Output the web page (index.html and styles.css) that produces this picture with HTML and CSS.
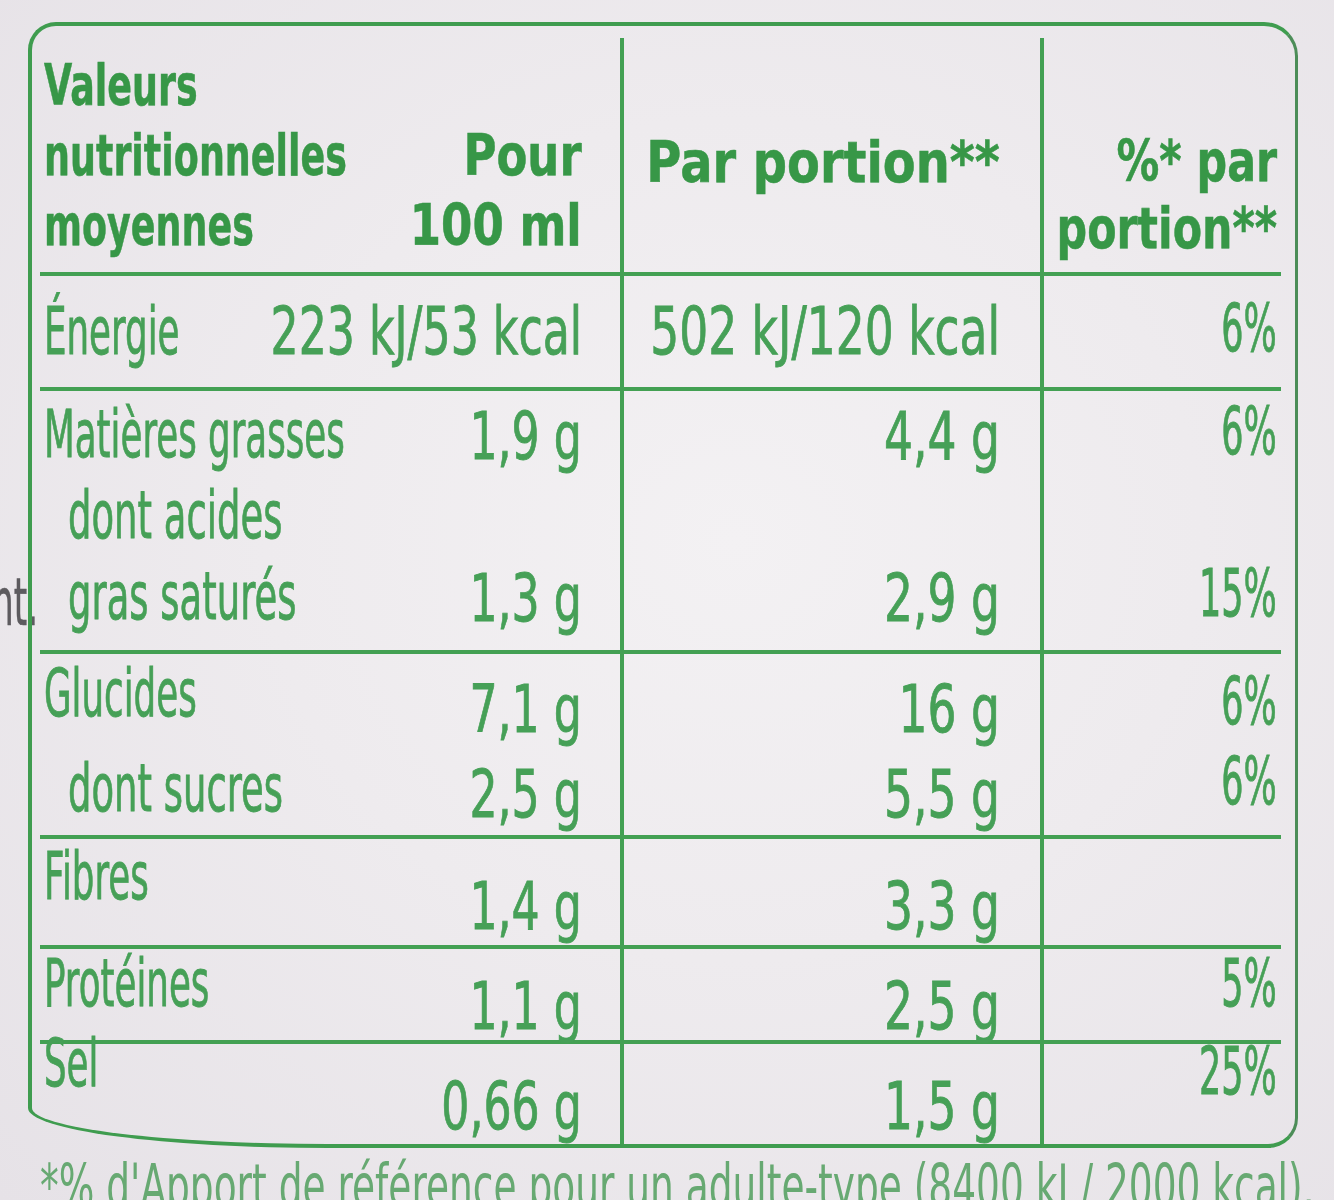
FILE: index.html
```html
<!DOCTYPE html>
<html lang="fr">
<head>
<meta charset="utf-8">
<title>Valeurs nutritionnelles</title>
<link rel="stylesheet" href="styles.css">
</head>
<body>
<div class="page">
  <div class="outside"><span class="t">nt.</span></div>
  <div class="box">
    <div class="row head">
      <div class="c lab"><div class="l"><span class="t">Valeurs</span></div><div class="l"><span class="t">nutritionnelles</span></div><div class="l"><span class="t">moyennes</span></div></div>
      <div class="c r va"><div class="l"><span class="t">Pour</span></div><div class="l"><span class="t">100 ml</span></div></div>
      <div class="c r vb"><div class="l"><span class="t">Par portion**</span></div></div>
      <div class="c r vc"><div class="l"><span class="t">%* par</span></div><div class="l"><span class="t">portion**</span></div></div>
    </div>
    <div class="row energie">
      <div class="c lab"><div class="l"><span class="t">Énergie</span></div></div>
      <div class="c r va"><div class="l"><span class="t">223 kJ/53 kcal</span></div></div>
      <div class="c r vb"><div class="l"><span class="t">502 kJ/120 kcal</span></div></div>
      <div class="c r vc"><div class="l"><span class="t">6%</span></div></div>
    </div>
    <div class="row mg">
      <div class="c lab"><div class="l"><span class="t">Matières grasses</span></div><div class="l sub"><span class="t">dont acides</span></div><div class="l sub"><span class="t">gras saturés</span></div></div>
      <div class="c r va"><div class="l"><span class="t">1,9 g</span></div><div class="l"></div><div class="l"><span class="t">1,3 g</span></div></div>
      <div class="c r vb"><div class="l"><span class="t">4,4 g</span></div><div class="l"></div><div class="l"><span class="t">2,9 g</span></div></div>
      <div class="c r vc"><div class="l"><span class="t">6%</span></div><div class="l"></div><div class="l"><span class="t">15%</span></div></div>
    </div>
    <div class="row glu">
      <div class="c lab"><div class="l"><span class="t">Glucides</span></div><div class="l sub"><span class="t">dont sucres</span></div></div>
      <div class="c r va"><div class="l"><span class="t">7,1 g</span></div><div class="l"><span class="t">2,5 g</span></div></div>
      <div class="c r vb"><div class="l"><span class="t">16 g</span></div><div class="l"><span class="t">5,5 g</span></div></div>
      <div class="c r vc"><div class="l"><span class="t">6%</span></div><div class="l"><span class="t">6%</span></div></div>
    </div>
    <div class="row fib">
      <div class="c lab"><div class="l"><span class="t">Fibres</span></div></div>
      <div class="c r va"><div class="l"><span class="t">1,4 g</span></div></div>
      <div class="c r vb"><div class="l"><span class="t">3,3 g</span></div></div>
      <div class="c r vc"></div>
    </div>
    <div class="row pro">
      <div class="c lab"><div class="l"><span class="t">Protéines</span></div></div>
      <div class="c r va"><div class="l"><span class="t">1,1 g</span></div></div>
      <div class="c r vb"><div class="l"><span class="t">2,5 g</span></div></div>
      <div class="c r vc"><div class="l"><span class="t">5%</span></div></div>
    </div>
    <div class="row sel">
      <div class="c lab"><div class="l"><span class="t">Sel</span></div></div>
      <div class="c r va"><div class="l"><span class="t">0,66 g</span></div></div>
      <div class="c r vb"><div class="l"><span class="t">1,5 g</span></div></div>
      <div class="c r vc"><div class="l"><span class="t">25%</span></div></div>
    </div>
  </div>
  <div class="foot"><span class="t">*% d'Apport de référence pour un adulte-type (8400 kJ / 2000 kcal).</span></div>
</div>
</body>
</html>
```

FILE: styles.css
```css
html, body {
  margin: 0;
  height: 1200px;
  overflow: hidden;
}
body {
  background: radial-gradient(ellipse at 55% 45%, #f3f1f3 0%, #eeebee 45%, #e6e2e7 100%);
  font-family: "DejaVu Sans", "Liberation Sans", sans-serif;
  color: #46a057;
}
.page {
  position: relative;
  padding-top: 22px;
  width: 1334px;
}
.box {
  margin-left: 28px;
  width: 1270px;
  height: 1126px;
  box-sizing: border-box;
  border: 4px solid #3f9c4f;
  border-right: 3px solid #4c8d58;
  border-radius: 28px 34px 30px 300px / 28px 34px 30px 40px;
  padding: 12px 14px 0 8px;
  filter: blur(0.5px);
}
.row {
  display: grid;
  grid-template-columns: 340px 240px 420px 1fr;
  border-top: 4px solid #43a053;
  box-sizing: border-box;
}
.row.head { border-top: 0; height: 234px; }
.row.energie { height: 115px; }
.row.mg { height: 263px; }
.row.glu { height: 185px; }
.row.fib { height: 110px; }
.row.pro { height: 95px; }
.row.sel { height: 104px; }

.c {
  --lh: 70px;
  --sx: 0.54;
  font-size: 66px;
  white-space: nowrap;
  min-width: 0;
  -webkit-text-stroke: 0.9px currentColor;
}
.lab { padding-left: 4px; }
.va { padding-right: 38px; --sx: 0.67; }
.vb { border-left: 4px solid #43a053; padding-right: 40px; --sx: 0.69; }
.vc { border-left: 4px solid #43a053; padding-right: 4px; --sx: 0.53; }

.l {
  display: flex;
  height: var(--lh);
  line-height: var(--lh);
}
.r .l { justify-content: flex-end; }
.l.sub { padding-left: 24px; }
.t {
  display: inline-block;
  flex-shrink: 0;
  transform: scaleX(var(--sx));
  transform-origin: left center;
}
.r .t { transform-origin: right center; }

/* header */
.head .c { font-weight: bold; font-size: 57px; color: #379747; -webkit-text-stroke: 0.6px currentColor; }
.head .lab { padding-top: 12px; --sx: 0.64; }
.head .va { padding-top: 82px; --sx: 0.79; }
.head .vb { padding-top: 89px; --sx: 0.84; }
.head .vc { padding-top: 90px; --sx: 0.75; --lh: 67px; }

/* énergie */
.energie .c { padding-top: 21px; }
.energie .vc { padding-top: 18px; }

/* matières grasses */
.mg .c { --lh: 81px; }
.mg .lab { padding-top: 3px; }
.mg .va, .mg .vb { padding-top: 5px; }
.mg .vc { padding-top: 0; }
.mg .lab .l:nth-child(2) .t, .mg .lab .l:nth-child(3) .t { --sx: 0.56; }

/* glucides */
.glu .lab { --lh: 90px; padding-top: 0; }
.glu .lab .l:first-child { line-height: 80px; }
.glu .va, .glu .vb { --lh: 85px; padding-top: 13px; }
.glu .vc { --lh: 80px; padding-top: 8px; }
.glu .lab .l:nth-child(2) .t { --sx: 0.56; }

/* fibres */
.fib .lab { padding-top: 3px; }
.fib .va, .fib .vb { padding-top: 33px; }

/* protéines */
.pro .lab { padding-top: 0; }
.pro .va, .pro .vb { padding-top: 23px; }
.pro .vc { padding-top: 0; }

/* sel */
.sel .lab { --lh: 40px; }
.sel .va, .sel .vb { padding-top: 28px; }
.sel .vc { --lh: 56px; }

.outside {
  position: absolute;
  left: -8px;
  top: 568px;
  font-size: 66px;
  line-height: 70px;
  color: #5d5b5f;
  white-space: nowrap;
  -webkit-text-stroke: 0.6px currentColor;
}
.outside .t { --sx: 0.52; }

.foot {
  margin-top: 8px;
  padding-left: 40px;
  font-size: 60px;
  line-height: 60px;
  color: #67a972;
  white-space: nowrap;
  --sx: 0.625;
  filter: blur(0.6px);
}
```
